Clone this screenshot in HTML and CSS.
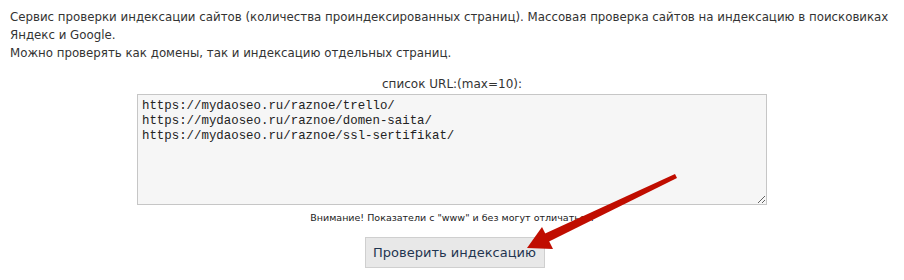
FILE: index.html
```html
<!DOCTYPE html>
<html lang="ru">
<head>
  <meta charset="UTF-8" />
  <title>Проверка индексации сайтов</title>
  <link rel="stylesheet" href="styles.css">
</head>
<body>

  <div class="intro">
    Сервис проверки индексации сайтов (количества проиндексированных страниц). Массовая проверка сайтов на индексацию в поисковиках Яндекс и Google.<br>
    Можно проверять как домены, так и индексацию отдельных страниц.
  </div>

  <form class="check-form">
    <label class="url-label" for="urls">список URL:(max=10):</label>
    <textarea id="urls" class="url-list">https://mydaoseo.ru/raznoe/trello/
https://mydaoseo.ru/raznoe/domen-saita/
https://mydaoseo.ru/raznoe/ssl-sertifikat/</textarea>
    <p class="note">Внимание! Показатели с "www" и без могут отличаться.</p>
    <button type="button" class="check-btn">Проверить индексацию</button>
  </form>

  <!-- стрелка поверх страницы -->
  <svg class="arrow" width="904" height="280" viewBox="0 0 904 280">
    <polygon points="675,174 677,178 548,242 544,234" fill="#c00d00"/>
    <polygon points="527,248 542,227 553,249" fill="#c00d00"/>
  </svg>

</body>
</html>
```

FILE: styles.css
```css
body {
  margin: 0;
  padding: 8px 6px 8px 10px;
  font-family: "DejaVu Sans", Verdana, sans-serif;
  font-size: 11.8px;
  color: #333;
  background: #fff;
  position: relative;
}
.intro {
  line-height: 18px;
}
.check-form {
  display: flex;
  flex-direction: column;
  align-items: center;
  margin-top: 15px;
  padding-right: 4px;
}
.url-label {
  font-size: 12px;
  line-height: 14px;
  margin-bottom: 3px;
}
.url-list {
  width: 630px;
  height: 111px;
  box-sizing: border-box;
  border: 1px solid #c6c6c6;
  background: #f6f6f6;
  padding: 4px 4px 2px;
  font-family: "Liberation Mono", monospace;
  font-size: 12.4px;
  line-height: 15px;
  color: #222;
}
.note {
  font-size: 9.5px;
  margin: 7px 0 0;
  color: #222;
}
.check-btn {
  margin-top: 14px;
  margin-left: 5px;
  width: 180px;
  height: 31px;
  background: #e8e8e8;
  border: 1px solid #cfcfcf;
  border-radius: 0;
  font-family: "DejaVu Sans", Verdana, sans-serif;
  font-size: 13px;
  color: #1f3550;
  cursor: pointer;
}
.arrow {
  position: absolute;
  left: 0;
  top: 0;
  pointer-events: none;
}
```
